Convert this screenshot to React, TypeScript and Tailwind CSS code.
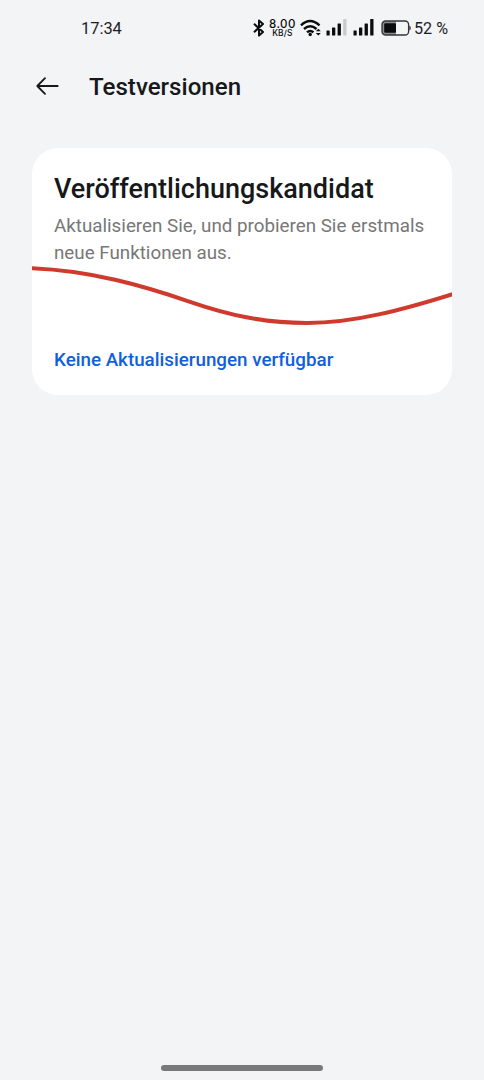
function SignalBars({ weak = false }: { weak?: boolean }) {
  return (
    <svg width="21" height="17" viewBox="0 0 21 17" fill="#0b0c0d">
      <rect x="0.5" y="11.5" width="3.2" height="5" rx="0.6" />
      <rect x="6" y="8.5" width="3.3" height="8" rx="0.6" />
      <rect x="11.6" y="4.5" width="3.3" height="12" rx="0.6" />
      <rect x="17.2" y="0" width="3.3" height="16.5" rx="0.6" fill={weak ? '#c9cacc' : '#0b0c0d'} />
    </svg>
  );
}

function StatusBar() {
  return (
    <div className="flex h-[56px] items-center justify-between pl-[81px] pr-[36px] text-[#1c1d1f]">
      <span className="mt-[2px] text-[16.4px] leading-none">17:34</span>
      <div className="flex items-center">
        {/* Bluetooth */}
        <svg width="12" height="18" viewBox="0 0 12 18" fill="none" stroke="#0b0c0d" strokeWidth="2" strokeLinejoin="round">
          <path d="M1 4.8 10 13.1 6 16.6V1.4L10 4.9 1 13.2" />
        </svg>
        <div className="mt-[1px] ml-[4px] flex w-[27px] flex-col items-center font-[Inter,sans-serif] text-[#0b0c0d]">
          <span className="text-[11.5px] leading-[9px] font-medium tracking-[0.5px]">8.00</span>
          <span className="text-[8.4px] leading-[8px] font-medium tracking-[0.2px]">KB/S</span>
        </div>
        {/* WiFi */}
        <svg className="ml-[4px]" width="23" height="18" viewBox="0 0 23 18" fill="none" stroke="#0b0c0d" strokeWidth="2.4">
          <path d="M1 6.3Q10 -2.2 19.5 6.3M4 10Q10.2 4.4 16.5 10M7 13.2Q10.2 10.6 13.5 13.2" />
          <circle cx="10.2" cy="15.5" r="1.7" fill="#0b0c0d" stroke="none" />
          <path d="M15.8 12.2 18.3 9.8 20.8 12.2ZM15.8 14H20.8L18.3 16.4Z" fill="#0b0c0d" stroke="none" />
        </svg>
        <div className="ml-[3px] flex gap-[6px]">
          <SignalBars weak />
          <SignalBars />
        </div>
        {/* Battery */}
        <svg className="mt-[1px] ml-[7px]" width="30" height="17" viewBox="0 0 30 17">
          <path d="M4.6 1H15V15H4.6Q1 15 1 11.4V4.6Q1 1 4.6 1Z" fill="#8b8c8e" />
          <rect x="1" y="1" width="26.6" height="14" rx="3.6" fill="none" stroke="#333436" strokeWidth="1.3" />
          <rect x="3.2" y="3.2" width="11.8" height="9.6" rx="1" fill="#0b0c0d" />
          <path d="M28.3 5.5Q29.8 6 29.8 8T28.3 10.5Z" fill="#333436" />
        </svg>
        <span className="mt-[2px] ml-[3px] whitespace-nowrap text-[16.2px] leading-none">52 %</span>
      </div>
    </div>
  );
}

export default function App() {
  return (
    <div className="flex h-[1080px] w-[484px] flex-col bg-[#f2f4f6] font-[Roboto,sans-serif]">
      <StatusBar />

      {/* Header */}
      <header className="flex h-[92px] items-start pl-[36px] pt-[13px]">
        <svg className="mt-[8px]" width="23" height="19" viewBox="0 0 23 19" fill="none" stroke="#17181a" strokeWidth="1.8" strokeLinecap="round" strokeLinejoin="round">
          <path d="M21.7 9H1.3M9 1.2 1.3 9 9 16.8" />
        </svg>
        <h1 className="ml-[30px] text-[24.1px] leading-[36px] font-medium text-[#17181a]">Testversionen</h1>
      </header>

      {/* Release card */}
      <main className="mx-8 h-[247px] rounded-[26px] bg-white pt-[23px]">
        <h2 className="px-[22px] text-[27px] leading-[36px] font-medium text-[#17181a]">Veröffentlichungskandidat</h2>
        <p className="mt-[6px] px-[22px] text-[18.8px] leading-[27px] whitespace-nowrap text-[#777777]">
          Aktualisieren Sie, und probieren Sie erstmals
          <br />
          neue Funktionen aus.
        </p>
        <svg className="mt-[-1px] block" width="420" height="64" viewBox="0 0 420 64" fill="none" stroke="#d03a2d" strokeWidth="4">
          <path d="M-1 2.3C60 4.7 112 20 158 35.8C198 49.5 233 57 275 57C323 57 373 43 421 28" />
        </svg>
        <p className="mt-[16px] px-[22px] text-[18.8px] leading-[28px] font-medium text-[#1060dc]">Keine Aktualisierungen verfügbar</p>
      </main>

      {/* Gesture bar */}
      <div className="mx-auto mt-auto mb-[9px] h-[6px] w-[162px] rounded-full bg-[#78797b]" />
    </div>
  );
}
